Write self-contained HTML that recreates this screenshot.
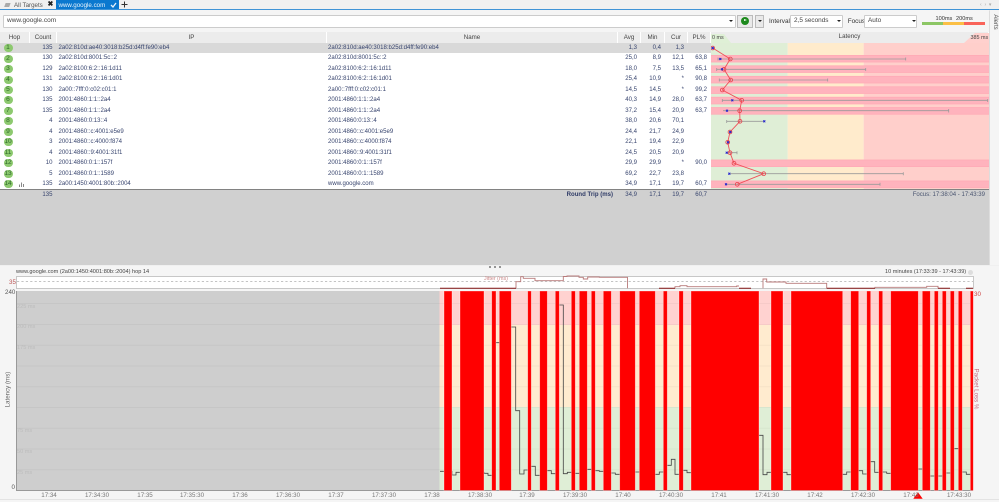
<!DOCTYPE html>
<html><head><meta charset="utf-8"><style>
html,body{margin:0;padding:0;width:999px;height:502px;overflow:hidden;background:#f5f5f5}
body{font-family:"Liberation Sans",sans-serif;font-size:6.2px;color:#333;position:relative}
#b{position:absolute;left:0;top:0;width:999px;height:502px;filter:blur(.35px)}
.a{position:absolute;white-space:nowrap}
.h{position:absolute;top:32px;height:11px;line-height:11px;background:#ececec;border-right:1px solid #fff;text-align:center;box-sizing:border-box;color:#444}
.r{position:absolute;left:0;width:711px;height:10.46px;line-height:10.46px;color:#37446e;font-size:6.05px}
.r span{position:absolute;white-space:nowrap}
.r .n{left:3.5px;top:1.2px;height:8px;min-width:9px;padding:0 .5px;box-sizing:border-box;border-radius:4px;background:#8dc96f;color:#2f6a2a;font-size:6.6px;line-height:8px;text-align:center}
.r .c{left:30px;width:22.5px;text-align:right}
.r .i{left:58.5px}.r .m{left:328px}
.r .v1{left:618px;width:19px;text-align:right}
.r .v2{left:641px;width:20px;text-align:right}
.r .v3{left:664px;width:20px;text-align:right}
.r .v4{left:687px;width:20px;text-align:right}
.sel{position:absolute;background:#fff;border:1px solid #ccc;box-sizing:border-box;border-radius:1px;line-height:10px;padding-left:3px;color:#444}
.ar{position:absolute;width:0;height:0;border-left:2px solid transparent;border-right:2px solid transparent;border-top:2.4px solid #222}
.t{position:absolute;top:492px;width:40px;text-align:center;color:#777}
.g{position:absolute;left:17px;color:#bcbcbc;font-size:5.6px}
</style></head><body><div id="b">

<div class="a" style="left:0;top:0;width:999px;height:9px;background:#f0f0f0"></div>
<div class="a" style="left:5px;top:3px;width:5px;height:3.5px;background:#aaa;transform:skewX(-20deg)"></div>
<div class="a" style="left:14px;top:1.5px;color:#555;line-height:7px">All Targets</div>
<div class="a" style="left:47.5px;top:1px;color:#222;font-weight:bold;font-size:7px;line-height:8px">✖</div>
<div class="a" style="left:56px;top:0;width:63px;height:9px;background:#0a78cf"></div>
<div class="a" style="left:58.5px;top:1.5px;color:#e8f3fb;line-height:7px">www.google.com</div>
<svg class="a" style="left:110px;top:2px" width="7" height="6"><path d="M1 3l2 2 3-4" fill="none" stroke="#e8f3fb" stroke-width="1.3"/></svg>
<svg class="a" style="left:121px;top:1px" width="7" height="7"><path d="M3.5 .5v6M.5 3.5h6" stroke="#333" stroke-width="1"/></svg>
<div class="a" style="left:980px;top:2px;color:#aaa;font-size:5px">‹ &nbsp;›&nbsp; ▾</div>
<div class="a" style="left:0;top:9px;width:999px;height:1.4px;background:#3f93d6"></div>

<div class="sel" style="left:3px;top:15px;width:733px;height:12.5px;font-size:6.5px">www.google.com</div>
<div class="ar" style="left:729px;top:20px"></div>
<div class="a" style="left:737px;top:15px;width:16px;height:12.5px;background:#e9e9e9;border:1px solid #bbb;box-sizing:border-box"></div>
<div class="a" style="left:740.5px;top:17px;width:8px;height:8px;border-radius:4px;background:#1d8a1d"></div>
<div class="a" style="left:743.5px;top:19.2px;width:0;height:0;border-left:3px solid #fff;border-top:1.8px solid transparent;border-bottom:1.8px solid transparent"></div>
<div class="a" style="left:755px;top:15px;width:9px;height:12.5px;background:#e9e9e9;border:1px solid #bbb;box-sizing:border-box"></div>
<div class="ar" style="left:757.5px;top:20px"></div>
<div class="a" style="left:769px;top:17.5px;line-height:8px;font-size:6.4px">Interval</div>
<div class="sel" style="left:790px;top:15px;width:53px;height:12.5px;font-size:6.4px">2,5 seconds</div>
<div class="ar" style="left:837px;top:20px"></div>
<div class="a" style="left:847.7px;top:17.5px;line-height:8px;font-size:6.4px">Focus</div>
<div class="sel" style="left:864px;top:15px;width:53px;height:12.5px;font-size:6.4px">Auto</div>
<div class="ar" style="left:911.5px;top:20px"></div>
<div class="a" style="left:922px;top:22px;width:21px;height:3px;background:#8cc665"></div>
<div class="a" style="left:943px;top:22px;width:21px;height:3px;background:#fbbf45"></div>
<div class="a" style="left:964px;top:22px;width:21px;height:3px;background:#f9645a"></div>
<div class="a" style="left:935.5px;top:15.5px;line-height:6px;font-size:5.6px">100ms</div>
<div class="a" style="left:956px;top:15.5px;line-height:6px;font-size:5.6px">200ms</div>

<div class="h" style="left:0;width:30px">Hop</div>
<div class="h" style="left:30px;width:27px">Count</div>
<div class="h" style="left:57px;width:270px">IP</div>
<div class="h" style="left:327px;width:291px">Name</div>
<div class="h" style="left:618px;width:23px">Avg</div>
<div class="h" style="left:641px;width:24px">Min</div>
<div class="h" style="left:665px;width:23px">Cur</div>
<div class="h" style="left:688px;width:23px">PL%</div>
<div class="h" style="left:711px;width:278px;padding-bottom:2px;line-height:9px">Latency</div>

<div class="a" style="left:0;top:43px;width:711px;height:146px;background:#fff"></div>
<div class="a" style="left:0;top:43.4px;width:711px;height:10px;background:#d9d9d9"></div>

<svg class="a" style="left:711px;top:32px" width="278" height="157" viewBox="711 32 278 157">
<path d="M711 34H724L731 43H711Z" fill="#dff0d6"/>
<path d="M989 33H975L964 43H989Z" fill="#ffd0cd"/>
<rect x="711" y="43" width="76.7" height="146" fill="#dfeed6"/>
<rect x="787.7" y="43" width="76" height="146" fill="#ffebcc"/>
<rect x="863.7" y="43" width="125.3" height="146" fill="#ffcfcb"/>
<g fill="#ffb3bd">
<rect x="711" y="55" width="278" height="7.4"/><rect x="711" y="65.4" width="278" height="7.4"/><rect x="711" y="75.9" width="278" height="7.4"/><rect x="711" y="86.4" width="278" height="7.4"/><rect x="711" y="96.8" width="278" height="7.4"/><rect x="711" y="107.2" width="278" height="7.4"/><rect x="711" y="159.6" width="278" height="7.4"/><rect x="711" y="180.5" width="278" height="7.4"/>
</g>
<g stroke="#ffa6b2" stroke-width=".5"><path d="M711 55.4H989M711 62H989M711 65.8H989M711 72.5H989M711 76.3H989M711 83H989M711 86.8H989M711 93.5H989M711 97.2H989M711 104H989M711 107.6H989M711 114.2H989M711 160H989M711 166.6H989M711 181H989M711 187.5H989"/></g>
<g stroke="#9a9a9a" stroke-width=".8" fill="none">
<path d="M718 59H905.7M718 57.5V60.5M905.7 57.5V60.5"/>
<path d="M716.7 69.3H865.7M716.7 68V71M865.7 68V71"/>
<path d="M719.3 80H827.7M719.3 78.5V81.5M827.7 78.5V81.5"/>
<path d="M722.3 100.3H987.7M722.3 99V102M987.7 99V102"/>
<path d="M723 110.7H948.7M948.7 109V112.5"/>
<path d="M726.7 121.3H764.3M726.7 120V123"/>
<path d="M729 132H732M727 142.3H730"/>
<path d="M726.7 152.7H737M737 151.2V154.2"/>
<path d="M729.3 173.7H903.3M903.3 172.2V175.2"/>
<path d="M725 184.3H880M880 182.8V185.8"/>
</g>
<polyline points="712.7,48 730.3,59 724,69.3 730.7,80 722.3,90 741.7,100.3 739.7,110.7 740,121.3 730,132 727.7,142.3 730,152.7 734,163.3 763.7,173.7 737.3,184.3" fill="none" stroke="#f0505a" stroke-width=".9"/>
<g fill="none" stroke="#e8404a" stroke-width=".8">
<circle cx="730.3" cy="59" r="1.9"/><circle cx="724" cy="69.3" r="1.9"/><circle cx="730.7" cy="80" r="1.9"/><circle cx="722.3" cy="90" r="1.9"/><circle cx="741.7" cy="100.3" r="1.9"/><circle cx="739.7" cy="110.7" r="1.9"/><circle cx="740" cy="121.3" r="1.9"/><circle cx="730" cy="132" r="1.9"/><circle cx="727.7" cy="142.3" r="1.9"/><circle cx="730" cy="152.7" r="1.9"/><circle cx="734" cy="163.3" r="1.9"/><circle cx="763.7" cy="173.7" r="1.9"/><circle cx="737.3" cy="184.3" r="1.9"/><circle cx="712.7" cy="48" r="1.9"/>
</g>
<g stroke="#2020d0" stroke-width=".9" fill="none">
<path d="M711.7 47l2 2m0-2l-2 2"/><path d="M719.3 58l2 2m0-2l-2 2"/><path d="M721 68.3l2 2m0-2l-2 2"/><path d="M731.3 99.3l2 2m0-2l-2 2"/><path d="M726 109.7l2 2m0-2l-2 2"/><path d="M763.3 120.3l2 2m0-2l-2 2"/><path d="M729.3 131l2 2m0-2l-2 2"/><path d="M727 141.3l2 2m0-2l-2 2"/><path d="M725.7 151.7l2 2m0-2l-2 2"/><path d="M728.3 172.7l2 2m0-2l-2 2"/><path d="M725 183.3l2 2m0-2l-2 2"/>
</g>
</svg>
<div class="a" style="left:712px;top:35px;line-height:6px;font-size:5.4px;color:#444">0 ms</div>
<div class="a" style="left:970.5px;top:35px;line-height:6px;font-size:5.4px;color:#444">385 ms</div>

<div class="r" style="top:43px"><span class="n">1</span><span class="c">135</span><span class="i">2a02:810d:ae40:3018:b25d:d4ff:fe90:eb4</span><span class="m">2a02:810d:ae40:3018:b25d:d4ff:fe90:eb4</span><span class="v1">1,3</span><span class="v2">0,4</span><span class="v3">1,3</span></div>
<div class="r" style="top:53.46px"><span class="n">2</span><span class="c">130</span><span class="i">2a02:810d:8001:5c::2</span><span class="m">2a02:810d:8001:5c::2</span><span class="v1">25,0</span><span class="v2">8,9</span><span class="v3">12,1</span><span class="v4">63,8</span></div>
<div class="r" style="top:63.92px"><span class="n">3</span><span class="c">129</span><span class="i">2a02:8100:6:2::16:1d11</span><span class="m">2a02:8100:6:2::16:1d11</span><span class="v1">18,0</span><span class="v2">7,5</span><span class="v3">13,5</span><span class="v4">65,1</span></div>
<div class="r" style="top:74.38px"><span class="n">4</span><span class="c">131</span><span class="i">2a02:8100:6:2::16:1d01</span><span class="m">2a02:8100:6:2::16:1d01</span><span class="v1">25,4</span><span class="v2">10,9</span><span class="v3">*</span><span class="v4">90,8</span></div>
<div class="r" style="top:84.84px"><span class="n">5</span><span class="c">130</span><span class="i">2a00::7fff:0:c02:c01:1</span><span class="m">2a00::7fff:0:c02:c01:1</span><span class="v1">14,5</span><span class="v2">14,5</span><span class="v3">*</span><span class="v4">99,2</span></div>
<div class="r" style="top:95.3px"><span class="n">6</span><span class="c">135</span><span class="i">2001:4860:1:1::2a4</span><span class="m">2001:4860:1:1::2a4</span><span class="v1">40,3</span><span class="v2">14,9</span><span class="v3">28,0</span><span class="v4">63,7</span></div>
<div class="r" style="top:105.76px"><span class="n">7</span><span class="c">135</span><span class="i">2001:4860:1:1::2a4</span><span class="m">2001:4860:1:1::2a4</span><span class="v1">37,2</span><span class="v2">15,4</span><span class="v3">20,9</span><span class="v4">63,7</span></div>
<div class="r" style="top:116.22px"><span class="n">8</span><span class="c">4</span><span class="i">2001:4860:0:13::4</span><span class="m">2001:4860:0:13::4</span><span class="v1">38,0</span><span class="v2">20,6</span><span class="v3">70,1</span></div>
<div class="r" style="top:126.68px"><span class="n">9</span><span class="c">4</span><span class="i">2001:4860::c:4001:e5e9</span><span class="m">2001:4860::c:4001:e5e9</span><span class="v1">24,4</span><span class="v2">21,7</span><span class="v3">24,9</span></div>
<div class="r" style="top:137.14px"><span class="n">10</span><span class="c">3</span><span class="i">2001:4860::c:4000:f874</span><span class="m">2001:4860::c:4000:f874</span><span class="v1">22,1</span><span class="v2">19,4</span><span class="v3">22,9</span></div>
<div class="r" style="top:147.6px"><span class="n">11</span><span class="c">4</span><span class="i">2001:4860::9:4001:31f1</span><span class="m">2001:4860::9:4001:31f1</span><span class="v1">24,5</span><span class="v2">20,5</span><span class="v3">20,9</span></div>
<div class="r" style="top:158.06px"><span class="n">12</span><span class="c">10</span><span class="i">2001:4860:0:1::157f</span><span class="m">2001:4860:0:1::157f</span><span class="v1">29,9</span><span class="v2">29,9</span><span class="v3">*</span><span class="v4">90,0</span></div>
<div class="r" style="top:168.52px"><span class="n">13</span><span class="c">5</span><span class="i">2001:4860:0:1::1589</span><span class="m">2001:4860:0:1::1589</span><span class="v1">69,2</span><span class="v2">22,7</span><span class="v3">23,8</span></div>
<div class="r" style="top:178.98px"><span class="n">14</span><span class="c">135</span><span class="i">2a00:1450:4001:80b::2004</span><span class="m">www.google.com</span><span class="v1">34,9</span><span class="v2">17,1</span><span class="v3">19,7</span><span class="v4">60,7</span></div>
<svg class="a" style="left:18px;top:181px" width="8" height="7"><path d="M1.5 6V3.5M3.5 6V1.5M5.5 6V3" stroke="#888" stroke-width="1"/></svg>

<div class="a" style="left:489px;top:266px;width:2px;height:2px;border-radius:1px;background:#777;z-index:3"></div>
<div class="a" style="left:494px;top:266px;width:2px;height:2px;border-radius:1px;background:#777;z-index:3"></div>
<div class="a" style="left:499px;top:266px;width:2px;height:2px;border-radius:1px;background:#777;z-index:3"></div>
<div class="a" style="left:16px;top:269px;line-height:7px;color:#444;font-size:5.6px">www.google.com (2a00:1450:4001:80b::2004) hop 14</div>
<div class="a" style="left:885px;top:269px;line-height:7px;color:#444;font-size:5.6px">10 minutes (17:33:39 - 17:43:39)</div>
<div class="a" style="left:968px;top:269.5px;width:5px;height:5px;border-radius:3px;background:#ddd"></div>

<svg class="a" style="left:0;top:0" width="999" height="502" viewBox="0 0 999 502">
<rect x="0" y="189" width="989" height="76" fill="#d0d0d0"/>
<path d="M0 189.4H989" stroke="#777" stroke-width=".9"/>
<rect x="989" y="10.4" width="10" height="255" fill="#f5f5f5"/>
<path d="M989.5 10.4V265" stroke="#ddd" stroke-width="1"/>
<rect x="0" y="265" width="999" height="1" fill="#f0f0f0"/>
<rect x="16.5" y="276.5" width="957" height="12" fill="#fff" stroke="#bbb" stroke-width=".8"/>
<path d="M17 281.5H973" stroke="#888" stroke-width=".6" stroke-dasharray="2.2 2.2"/>
<path d="M516 288.3V281.7H520.7V276.7H523.3V278.3H535V280.7H563.3V276.5H567V276H579V277.3H583.3V279H587.7V277H599.3V277.3H627.5V288.3" fill="none" stroke="#b87a7a" stroke-width=".9"/>
<path d="M675 288.3V286.7H680V285.7H687V286.7H736.7V286H739M763 288.3V279H766.7V282H786V283.3H826.7V288.3M875 288.3V287.3H926.7V286.3H938V288.3" fill="none" stroke="#b87a7a" stroke-width=".9"/>
<path d="M440 288.3H516M659 288.3H675M739 288.3H751M826.7 288.3H875M938 288.3H950M966 288.3H973" fill="none" stroke="#8a1a1a" stroke-width="1"/>

<rect x="16" y="291" width="423.5" height="199.5" fill="#cecece"/>
<rect x="439.5" y="291" width="534" height="34" fill="#ffd2d0"/>
<rect x="439.5" y="325" width="534" height="82" fill="#ffebcf"/>
<rect x="439.5" y="407" width="534" height="83.5" fill="#dfeed6"/>
<path d="M17 303.5H973M17 324.5H973M17 345.3H973M17 366H973M17 386.7H973M17 407.5H973M17 428.2H973M17 449H973M17 469.7H973" stroke="#000" stroke-opacity=".035" stroke-width="1"/>
<path d="M16.5 291V490.5H973" fill="none" stroke="#999" stroke-width="1"/>

<path d="M440 471.3H452V475H456V472.3H484V473.3H488V475.3H494V342.7H505V327H515.7V410.7H519.7V474H524V470H529V466.3H535.3V475.3H543V470.7H551.3V473.7H557V305H563.3V473.7H567.3V472.3H573V473.3H583V469.3H593V470.7H599.3V471.3H607V473H615.3V474.3H627V472H647V474.3H659.3V472H665V465.3H671.3V459.3H675V474.3H681V470.3H687V472.7H750V435.3H763V474.7H767V472.3H787V474.7H795V474.3H846.7V472H855V470.7H862.7V474H868V461.7H874.7V472.3H880V472H886.7V473.3H900V469H926V476H944V473H952V448.7H960V472H966.3V474.3H971" fill="none" stroke="#444" stroke-width=".8"/>

<g fill="#ff0000" stroke="#fff" stroke-opacity=".45" stroke-width=".7">
<rect x="444" y="291" width="8" height="199.5"/><rect x="460" y="291" width="24" height="199.5"/><rect x="491.7" y="291" width="4.3" height="199.5"/><rect x="499.3" y="291" width="12" height="199.5"/><rect x="527.7" y="291" width="3.6" height="199.5"/><rect x="539.7" y="291" width="7.6" height="199.5"/><rect x="555.3" y="291" width="4" height="199.5"/><rect x="571.3" y="291" width="4" height="199.5"/><rect x="579.3" y="291" width="8" height="199.5"/><rect x="591.3" y="291" width="4" height="199.5"/><rect x="603.3" y="291" width="8" height="199.5"/><rect x="619.7" y="291" width="15.6" height="199.5"/><rect x="639.3" y="291" width="16" height="199.5"/><rect x="663.3" y="291" width="4" height="199.5"/><rect x="679" y="291" width="4.3" height="199.5"/><rect x="691" y="291" width="68" height="199.5"/><rect x="771" y="291" width="12" height="199.5"/><rect x="791" y="291" width="51.7" height="199.5"/><rect x="850.7" y="291" width="8" height="199.5"/><rect x="866.7" y="291" width="4" height="199.5"/><rect x="878.7" y="291" width="4" height="199.5"/><rect x="890.7" y="291" width="27.6" height="199.5"/><rect x="922.3" y="291" width="8" height="199.5"/><rect x="934.3" y="291" width="4" height="199.5"/><rect x="942.3" y="291" width="4" height="199.5"/><rect x="950.3" y="291" width="4" height="199.5"/><rect x="958.3" y="291" width="4" height="199.5"/><rect x="970.3" y="291" width="3" height="199.5"/>
</g>
<path d="M913.3 498.7L918 492.3L922.7 498.7Z" fill="#f00"/>
<path d="M0 499.5H999" stroke="#e3e3e3" stroke-width="1"/>
</svg>

<div class="r" style="top:189.5px;width:989px"><span class="c">135</span><span style="right:376px;font-weight:bold;color:#2e3a66">Round Trip (ms)</span><span class="v1">34,9</span><span class="v2">17,1</span><span class="v3">19,7</span><span class="v4">60,7</span><span style="right:4px;color:#4a5570">Focus: 17:38:04 - 17:43:39</span></div>
<div class="a" style="left:987px;top:19px;width:16px;text-align:center;transform:rotate(90deg);font-size:6px;color:#555;line-height:6px">Alerts</div>

<div class="a" style="left:484px;top:276px;line-height:6px;font-size:5.4px;color:#c88">Jitter (ms)</div>
<div class="a" style="left:9px;top:279px;line-height:7px;color:#b55">35</div>
<div class="a" style="left:5px;top:289px;line-height:7px;color:#555">240</div>
<div class="a" style="left:11.5px;top:483.5px;line-height:7px;color:#555">0</div>
<div class="a" style="left:974px;top:291px;line-height:7px;color:#c44">30</div>
<div class="a" style="left:-12px;top:386px;width:40px;text-align:center;line-height:7px;transform:rotate(-90deg);color:#666">Latency (ms)</div>
<div class="a" style="left:956px;top:385px;width:40px;text-align:center;line-height:7px;transform:rotate(90deg);color:#c46a80">Packet Loss %</div>

<div class="g" style="top:303.5px">225 ms</div><div class="g" style="top:324px">200 ms</div><div class="g" style="top:345px">175 ms</div><div class="g" style="top:428px">75 ms</div><div class="g" style="top:449px">50 ms</div><div class="g" style="top:470px">25 ms</div>

<div class="t" style="left:29px">17:34</div><div class="t" style="left:77px">17:34:30</div><div class="t" style="left:125px">17:35</div><div class="t" style="left:172px">17:35:30</div><div class="t" style="left:220px">17:36</div><div class="t" style="left:268px">17:36:30</div><div class="t" style="left:316px">17:37</div><div class="t" style="left:364px">17:37:30</div><div class="t" style="left:412px">17:38</div><div class="t" style="left:460px">17:38:30</div><div class="t" style="left:507px">17:39</div><div class="t" style="left:555px">17:39:30</div><div class="t" style="left:603px">17:40</div><div class="t" style="left:651px">17:40:30</div><div class="t" style="left:699px">17:41</div><div class="t" style="left:747px">17:41:30</div><div class="t" style="left:795px">17:42</div><div class="t" style="left:843px">17:42:30</div><div class="t" style="left:891px">17:43</div><div class="t" style="left:939px">17:43:30</div>

</div></body></html>
